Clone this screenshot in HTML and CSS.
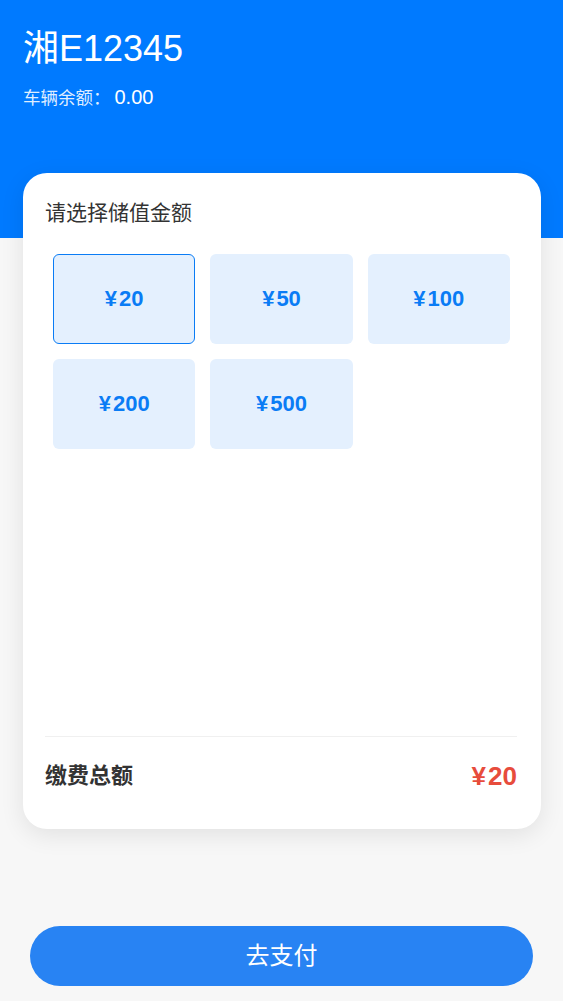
FILE: index.html
```html
<!DOCTYPE html>
<html lang="zh">
<head>
<meta charset="utf-8">
<link rel="stylesheet" href="styles.css">
</head>
<body>
<div class="page">
  <header class="hero">
    <div class="plate">湘E12345</div>
    <div class="balance"><span class="balance-label">车辆余额：</span><span class="balance-value">0.00</span></div>
  </header>
  <main class="card">
    <div class="card-title">请选择储值金额</div>
    <div class="options">
      <div class="option selected"><span class="cur">¥</span>20</div>
      <div class="option"><span class="cur">¥</span>50</div>
      <div class="option"><span class="cur">¥</span>100</div>
      <div class="option"><span class="cur">¥</span>200</div>
      <div class="option"><span class="cur">¥</span>500</div>
    </div>
    <div class="total">
      <span class="total-label">缴费总额</span>
      <span class="total-value"><span class="cur">¥</span>20</span>
    </div>
  </main>
  <div class="actions">
    <button class="pay">去支付</button>
  </div>
</div>
</body>
</html>
```
FILE: styles.css
```css
* { box-sizing: border-box; }
html, body { margin: 0; padding: 0; }
body {
  background: #f7f7f7;
  font-family: "Liberation Sans", Arial, "Noto Sans CJK SC", sans-serif;
  color: #333;
}
.page {
  width: 563px;
  height: 1001px;
  overflow: hidden;
}
.hero {
  background: #007aff;
  height: 238px;
  padding: 27px 23px 0;
  color: #fff;
}
.plate {
  font-size: 36px;
  line-height: 44px;
}
.balance {
  margin-top: 12px;
  line-height: 28px;
  display: flex;
  align-items: baseline;
}
.balance-label {
  font-size: 17.5px;
  color: rgba(255,255,255,0.88);
}
.balance-value {
  font-size: 20px;
  margin-left: 4px;
}
.card {
  margin: -65px 22px 0 23px;
  height: 656px;
  background: #fff;
  border-radius: 24px;
  box-shadow: 0 6px 24px rgba(0,0,0,0.09);
  padding: 26px 24px 22px 22px;
  display: flex;
  flex-direction: column;
}
.card-title {
  font-size: 21px;
  line-height: 28px;
  color: #333;
}
.options {
  flex: 1;
  margin-top: 27px;
  padding: 0 7px 0 8px;
  display: grid;
  grid-template-columns: repeat(3, 1fr);
  grid-auto-rows: 90px;
  column-gap: 15px;
  row-gap: 15px;
  align-content: start;
}
.option {
  background: #e4f0fe;
  border: 1px solid transparent;
  border-radius: 6px;
  display: flex;
  align-items: center;
  justify-content: center;
  font-size: 22px;
  font-weight: bold;
  color: #0a7cf5;
}
.option.selected {
  border-color: #0a7cf5;
}
.cur {
  margin-right: 2px;
}
.total {
  border-top: 1px solid #f0f0f0;
  padding: 24px 0 16px;
  display: flex;
  justify-content: space-between;
  align-items: center;
  line-height: 30px;
}
.total-label {
  font-size: 22px;
  font-weight: bold;
  color: #333;
}
.total-value {
  font-size: 26px;
  font-weight: bold;
  color: #e74c3c;
}
.actions {
  padding: 97px 30px 0;
}
.pay {
  display: block;
  width: 100%;
  height: 60px;
  border: none;
  border-radius: 30px;
  background: #2883f3;
  color: #fff;
  font-family: "Liberation Sans", "Noto Sans CJK SC", sans-serif;
  font-size: 24px;
  line-height: 58px;
  padding: 0;
}
```
